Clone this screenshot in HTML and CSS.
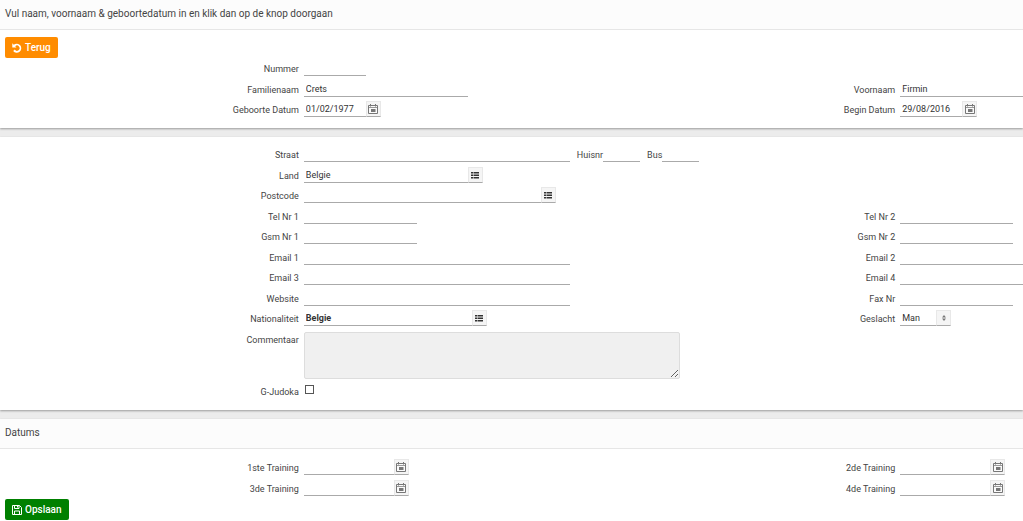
FILE: index.html
```html
<!DOCTYPE html>
<html lang="nl">
<head>
<meta charset="utf-8">
<meta name="viewport" content="width=device-width, initial-scale=1">
<title>Lid bewerken</title>
<link rel="stylesheet" href="styles.css">
</head>
<body>
<svg class="sprite" aria-hidden="true">
  <symbol id="cal" viewBox="0 0 10 10"><path d="M.5 1.500h9v8h-9z" fill="#fafafa" stroke="#777"/><path d="M1 3.500h8" stroke="#999" fill="none"/><path d="M2.500 0v2.500M7.500 0v2.500" stroke="#777" fill="none"/><path d="M3 5h4.500v3H3z" fill="#777"/></symbol>
  <symbol id="list" viewBox="0 0 8 7"><path d="M0 0h2v1.500H0zM2.500 0h5.500v1.500H2.500zM0 2.500h2V4H0zM2.500 2.500h5.500V4H2.500zM0 5h2v1.500H0zM2.500 5h5.500v1.500H2.500z" fill="#333"/></symbol>
</svg>
<form>
  <section class="panel">
    <h1 class="title">Vul naam, voornaam &amp; geboortedatum in en klik dan op de knop doorgaan</h1>
    <div class="toolbar">
      <button class="btn back" type="button"><svg class="btn-icon" viewBox="0 0 10 10" aria-hidden="true"><path d="M.3.300v4.200h4.200L3.200 3.200A2.600 2.600 0 1 1 2.800 6.600L1.200 8A4.500 4.500 0 1 0 1.800 1.800z" fill="#fff"/></svg>Terug</button>
    </div>
    <div class="rows">
      <div class="row"><label for="nummer">Nummer</label><div class="field"><input id="nummer" class="w-xs"></div></div>
      <div class="row"><label for="fam">Familienaam</label><div class="field"><input id="fam" class="w-md" value="Crets"></div><label for="voor">Voornaam</label><div class="field"><input id="voor" class="w-md" value="Firmin"></div></div>
      <div class="row"><label for="geb">Geboorte Datum</label><div class="field"><input id="geb" class="w-xs" value="01/02/1977"><button class="pick" type="button" aria-label="Kies datum"><svg class="cal"><use href="#cal"/></svg></button></div><label for="begin">Begin Datum</label><div class="field"><input id="begin" class="w-xs" value="29/08/2016"><button class="pick" type="button" aria-label="Kies datum"><svg class="cal"><use href="#cal"/></svg></button></div></div>
    </div>
  </section>

  <section class="panel">
    <div class="rows details">
      <div class="row"><label for="straat">Straat</label><div class="field"><input id="straat" class="w-xl"><label class="inline" for="huis">Huisnr</label><input id="huis" class="w-xxs"><label class="inline" for="bus">Bus</label><input id="bus" class="w-xxs"></div></div>
      <div class="row"><label for="land">Land</label><div class="field"><input id="land" class="w-md" value="Belgie"><button class="pick" type="button" aria-label="Kies land"><svg class="list"><use href="#list"/></svg></button></div></div>
      <div class="row"><label for="post">Postcode</label><div class="field"><input id="post" class="w-lg"><button class="pick" type="button" aria-label="Kies postcode"><svg class="list"><use href="#list"/></svg></button></div></div>
      <div class="row"><label for="tel1">Tel Nr 1</label><div class="field"><input id="tel1" class="w-tel"></div><label for="tel2">Tel Nr 2</label><div class="field"><input id="tel2" class="w-tel"></div></div>
      <div class="row"><label for="gsm1">Gsm Nr 1</label><div class="field"><input id="gsm1" class="w-tel"></div><label for="gsm2">Gsm Nr 2</label><div class="field"><input id="gsm2" class="w-tel"></div></div>
      <div class="row"><label for="em1">Email 1</label><div class="field"><input id="em1" class="w-xl"></div><label for="em2">Email 2</label><div class="field"><input id="em2" class="w-xl"></div></div>
      <div class="row"><label for="em3">Email 3</label><div class="field"><input id="em3" class="w-xl"></div><label for="em4">Email 4</label><div class="field"><input id="em4" class="w-xl"></div></div>
      <div class="row"><label for="web">Website</label><div class="field"><input id="web" class="w-xl"></div><label for="fax">Fax Nr</label><div class="field"><input id="fax" class="w-tel"></div></div>
      <div class="row"><label for="nat">Nationaliteit</label><div class="field"><input id="nat" class="w-nat" value="Belgie"><button class="pick" type="button" aria-label="Kies nationaliteit"><svg class="list"><use href="#list"/></svg></button></div><label for="sex">Geslacht</label><div class="field"><span class="select"><select id="sex"><option>Man</option><option>Vrouw</option></select><span class="pick"><svg class="updown" viewBox="0 0 4 6" aria-hidden="true"><path d="M0 2.500 2 0l2 2.500zM0 3.500 2 6l2-2.500z" fill="#777"/></svg></span></span></div></div>
      <div class="row top"><label for="com">Commentaar</label><div class="field"><textarea id="com"></textarea></div></div>
      <div class="row"><label for="gj">G-Judoka</label><div class="field check"><input id="gj" type="checkbox"></div></div>
    </div>
  </section>

  <section class="panel">
    <h2 class="title">Datums</h2>
    <div class="rows dates">
      <div class="row"><label for="t1">1ste Training</label><div class="field"><input id="t1" class="w-date"><button class="pick" type="button" aria-label="Kies datum"><svg class="cal"><use href="#cal"/></svg></button></div><label for="t2">2de Training</label><div class="field"><input id="t2" class="w-date"><button class="pick" type="button" aria-label="Kies datum"><svg class="cal"><use href="#cal"/></svg></button></div></div>
      <div class="row"><label for="t3">3de Training</label><div class="field"><input id="t3" class="w-date"><button class="pick" type="button" aria-label="Kies datum"><svg class="cal"><use href="#cal"/></svg></button></div><label for="t4">4de Training</label><div class="field"><input id="t4" class="w-date"><button class="pick" type="button" aria-label="Kies datum"><svg class="cal"><use href="#cal"/></svg></button></div></div>
    </div>
    <div class="actions">
      <button class="btn save" type="submit"><svg class="btn-icon" viewBox="0 0 10 10" aria-hidden="true"><path d="M.5.500h7l2 2v7h-9zM2.500.500v3h4.500v-3M2.500 9.500v-3.500h5v3.500M5.500 1v1.500" fill="none" stroke="#fff"/></svg>Opslaan</button>
    </div>
  </section>
</form>
</body>
</html>
```
FILE: styles.css
```css
* { box-sizing: border-box; }

body {
  margin: 0;
  background: #ececec;
  color: #444;
  font: 9px/14px Roboto, "Liberation Sans", sans-serif;
  overflow: hidden;
}

.sprite { position: absolute; width: 0; height: 0; }

form { display: flex; flex-direction: column; gap: 9px; }

.panel { background: #fff; box-shadow: 0 1px 2px rgba(0, 0, 0, .35); }

.title {
  margin: 0;
  padding: 7px 5px 8px;
  border-bottom: 1px solid #e6e6e6;
  background: #fcfcfc;
  font-size: 10px;
  font-weight: 400;
}

.toolbar { display: flex; padding: 7px 5px 2px; }
.actions { display: flex; padding: 3px 5px; }

.btn {
  display: flex;
  align-items: center;
  gap: 3px;
  height: 21px;
  padding: 0 7px;
  border: 0;
  border-radius: 2px;
  color: #fff;
  font: 500 10px/14px Roboto, "Liberation Sans", sans-serif;
}
.back { background: #ff8c00; }
.save { background: #008000; }
.btn-icon { width: 10px; height: 10px; }

.rows { display: flex; flex-direction: column; gap: 4px; padding-bottom: 11px; }
.details { padding: 9px 0 11px; }
.dates { padding: 10px 0 0; }

.row {
  display: grid;
  grid-template-columns: 29.7% 28.6% 29.7% 12%;
  align-items: end;
  min-height: 16px;
}
.row:nth-child(even) { min-height: 17px; }
.row > label { padding-right: 5px; text-align: right; white-space: nowrap; }

.field { display: flex; align-items: flex-end; }

input, select {
  flex: none;
  height: 16px;
  padding: 0 2px;
  border: 0;
  border-bottom: 1px solid #aaa;
  border-radius: 0;
  background: transparent;
  color: #333;
  font: inherit;
  outline: 0;
}

.w-xxs { width: 37px; }
.w-xs { width: 62px; }
.w-date { width: 90px; }
.w-tel { width: 113px; }
.w-md { width: 164px; }
.w-nat { width: 168px; font-weight: 700; }
.w-lg { width: 237px; }
.w-xl { width: 266px; }

.inline { padding-left: 7px; }

.pick {
  display: flex;
  flex: none;
  align-items: center;
  justify-content: center;
  width: 15px;
  height: 16px;
  padding: 0;
  border: 1px solid #e8e8e8;
  border-bottom-color: #aaa;
  background: #f5f5f5;
}
.cal { width: 10px; height: 10px; }
.list { width: 8px; height: 7px; }
.updown { width: 4px; height: 6px; }

.select { position: relative; width: 51px; height: 16px; }
.select select { width: 100%; appearance: none; }
.select .pick { position: absolute; top: 0; right: 0; pointer-events: none; }

.top { align-items: start; padding-top: 2px; }
.top label { padding-top: 1px; }
textarea {
  width: 376px;
  height: 47px;
  flex: none;
  border: 1px solid #ddd;
  border-radius: 2px;
  background: #f0f0f0;
  font: inherit;
  outline: 0;
}

.check { align-self: start; }
.check input {
  width: 9px;
  height: 9px;
  margin: 2px 0 0 1px;
  padding: 0;
  border: 1px solid #555;
  appearance: none;
}
```
